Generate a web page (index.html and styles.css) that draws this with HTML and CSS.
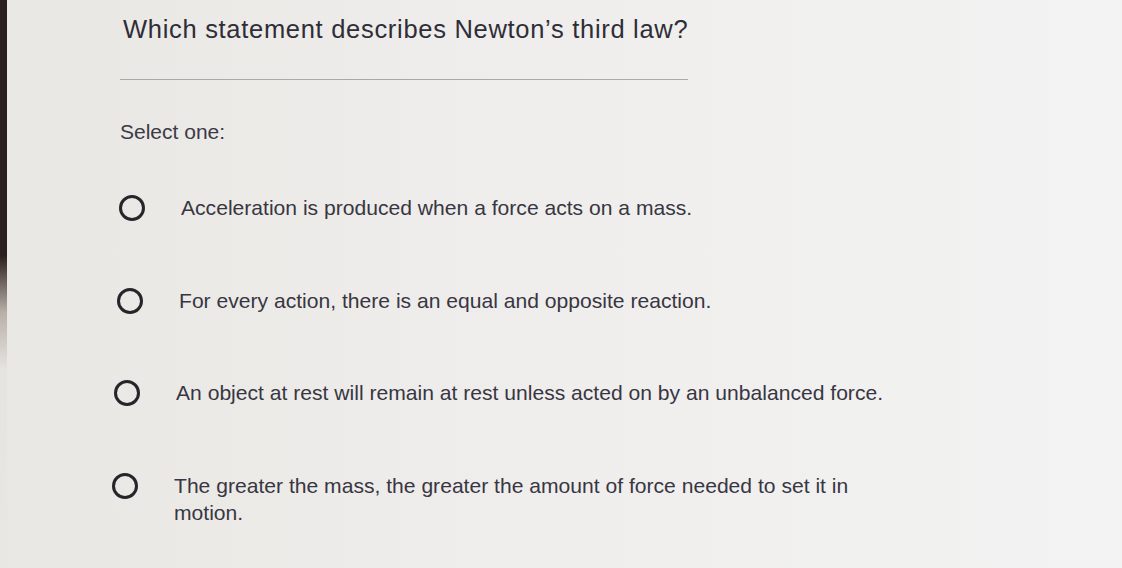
FILE: index.html
```html
<!DOCTYPE html>
<html>
<head>
<meta charset="utf-8">
<link rel="stylesheet" href="styles.css">
</head>
<body>
<div class="screen">
  <div class="edge"></div>
  <main class="quiz">
    <h1 class="question">Which statement describes Newton’s third law?</h1>
    <hr class="rule">
    <p class="prompt">Select one:</p>
    <ul class="options">
      <li class="option o1"><span class="radio"></span><span class="label">Acceleration is produced when a force acts on a mass.</span></li>
      <li class="option o2"><span class="radio"></span><span class="label">For every action, there is an equal and opposite reaction.</span></li>
      <li class="option o3"><span class="radio"></span><span class="label">An object at rest will remain at rest unless acted on by an unbalanced force.</span></li>
      <li class="option o4"><span class="radio"></span><span class="label">The greater the mass, the greater the amount of force needed to set it in motion.</span></li>
    </ul>
  </main>
</div>
</body>
</html>
```

FILE: styles.css
```css
html, body {
  margin: 0;
  padding: 0;
  width: 1122px;
  height: 568px;
  overflow: hidden;
}
body {
  font-family: "Liberation Sans", Arial, sans-serif;
  background: linear-gradient(90deg, #e8e7e3 0%, #eeedeb 40%, #f3f3f3 100%);
}
.screen {
  display: flex;
  height: 568px;
}
.edge {
  width: 7px;
  flex: none;
  background: linear-gradient(180deg, #2b1f1d 0%, #2b1f1d 45%, #b9b0a8 55%, #e6e4e0 65%, #e8e7e3 100%);
}
.quiz {
  padding-left: 113px;
  flex: 1;
}
.question {
  margin: 13px 0 0 3px;
  font-size: 25.5px;
  letter-spacing: 0.7px;
  font-weight: normal;
  color: #2f2d37;
  line-height: 32px;
}
.rule {
  margin: 34px 0 0 0;
  width: 568px;
  border: 0;
  border-top: 1px solid #a9a8ad;
  height: 0;
}
.prompt {
  margin: 40px 0 0 0;
  font-size: 21px;
  color: #3c3a46;
  line-height: 24px;
}
.options {
  list-style: none;
  margin: 50px 0 0 0;
  padding: 0;
}
.option {
  display: flex;
  align-items: flex-start;
  height: 92.5px;
  font-size: 21.1px;
  color: #383642;
  line-height: 27px;
}
.radio {
  flex: none;
  width: 20px;
  height: 20px;
  border: 3px solid #26252a;
  border-radius: 50%;
  margin-top: 1px;
}
.label {
  width: 700px;
}
.o1 { margin-left: -1px; }
.o1 .label { margin-left: 36px; }
.o2 { margin-left: -3px; }
.o2 .label { margin-left: 36px; }
.o3 { margin-left: -6px; }
.o3 .label { margin-left: 36px; width: 760px; }
.o4 { margin-left: -8px; }
.o4 .label { margin-left: 36px; width: 700px; }
```
